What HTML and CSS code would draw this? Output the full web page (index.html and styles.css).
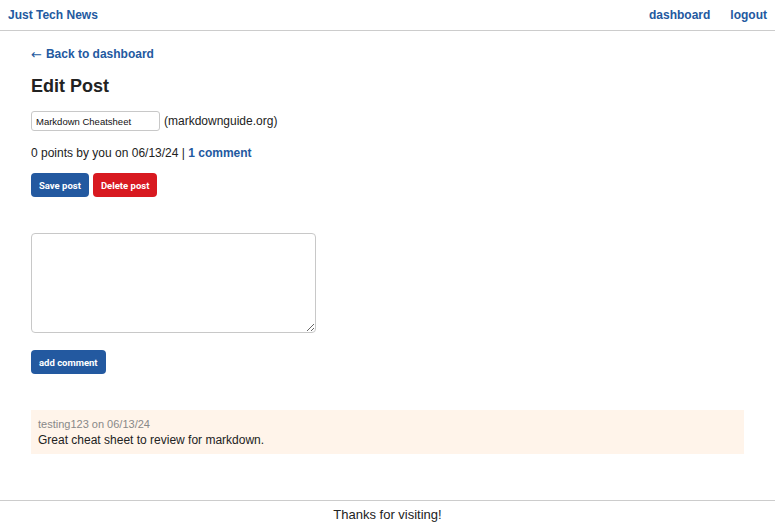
FILE: index.html
```html
<!DOCTYPE html>
<html lang="en">
<head>
<meta charset="utf-8">
<title>Just Tech News</title>
<link rel="stylesheet" href="styles.css">
</head>
<body>
<header class="site-header">
  <a class="brand" href="#">Just Tech News</a>
  <nav class="nav">
    <a href="#">dashboard</a>
    <a href="#">logout</a>
  </nav>
</header>
<main class="main">
  <a class="back" href="#"><span class="arrow">&larr;</span>Back to dashboard</a>
  <h2 class="title">Edit Post</h2>
  <form class="edit-form">
    <div class="title-row">
      <input class="title-input" type="text" value="Markdown Cheatsheet">
      <span class="domain">(markdownguide.org)</span>
    </div>
    <div class="meta">0 points by you on 06/13/24 | <a href="#">1 comment</a></div>
    <div class="actions">
      <button type="button" class="btn btn-blue">Save post</button>
      <button type="button" class="btn btn-red">Delete post</button>
    </div>
  </form>
  <form class="comment-form">
    <textarea class="comment-text"></textarea>
    <button type="button" class="btn btn-blue">add comment</button>
  </form>
  <section class="comments">
    <div class="comment">
      <div class="comment-meta">testing123 on 06/13/24</div>
      <div class="comment-body">Great cheat sheet to review for markdown.</div>
    </div>
  </section>
</main>
<footer class="site-footer">Thanks for visiting!</footer>
</body>
</html>
```
FILE: styles.css
```css
* { box-sizing: border-box; }
html, body { margin: 0; padding: 0; }
body {
  font-family: "Liberation Sans", Arial, sans-serif;
  font-size: 12px;
  color: #222;
  min-height: 531px;
  display: flex;
  flex-direction: column;
}
a { color: #2359a0; text-decoration: none; font-weight: bold; }
.site-header {
  display: flex;
  justify-content: space-between;
  align-items: center;
  height: 31px;
  padding: 0 8px 1px 8px;
  border-bottom: 1px solid #cccccc;
  font-size: 12px;
}
.nav { display: flex; gap: 20px; }
.main {
  flex: 1;
  padding: 16px 31px 0 31px;
}
.back { display: inline-flex; align-items: center; font-size: 12px; line-height: 15px; }
.arrow {
  font-family: "DejaVu Sans", sans-serif;
  font-weight: normal;
  font-size: 13px;
  margin-right: 4px;
}
.title {
  margin: 14px 0 15px;
  font-size: 18px;
  line-height: 20px;
}
.title-row { display: flex; align-items: center; gap: 4px; }
.title-input {
  width: 129px;
  height: 20px;
  border: 1px solid #c8c8c8;
  border-radius: 3px;
  padding: 0 4px;
  font-family: "Liberation Sans", Arial, sans-serif;
  font-size: 9.5px;
  color: #111;
}
.domain { font-size: 12px; }
.meta { margin-top: 14px; line-height: 16px; font-size: 12px; }
.actions { display: flex; gap: 4px; margin-top: 12px; }
.btn {
  border: none;
  border-radius: 4px;
  color: #fff;
  font-family: Roboto, "Liberation Sans", sans-serif;
  font-weight: bold;
  font-size: 9.5px;
  height: 24px;
  padding: 0 8px;
}
.btn-blue { background: #2359a0; }
.btn-red { background: #d81920; }
.comment-form {
  margin-top: 36px;
  display: flex;
  flex-direction: column;
  align-items: flex-start;
  gap: 17px;
}
.comment-text {
  width: 285px;
  height: 100px;
  border: 1px solid #c8c8c8;
  border-radius: 4px;
  display: block;
}
.comments { margin-top: 36px; }
.comment {
  background: #fff4ea;
  padding: 7px 7px 6px 7px;
}
.comment-meta { color: #888; font-size: 11px; line-height: 14px; }
.comment-body { font-size: 12px; line-height: 16px; margin-top: 1px; }
.site-footer {
  border-top: 1px solid #cccccc;
  text-align: center;
  height: 31px;
  line-height: 28px;
  font-size: 13px;
}
```
